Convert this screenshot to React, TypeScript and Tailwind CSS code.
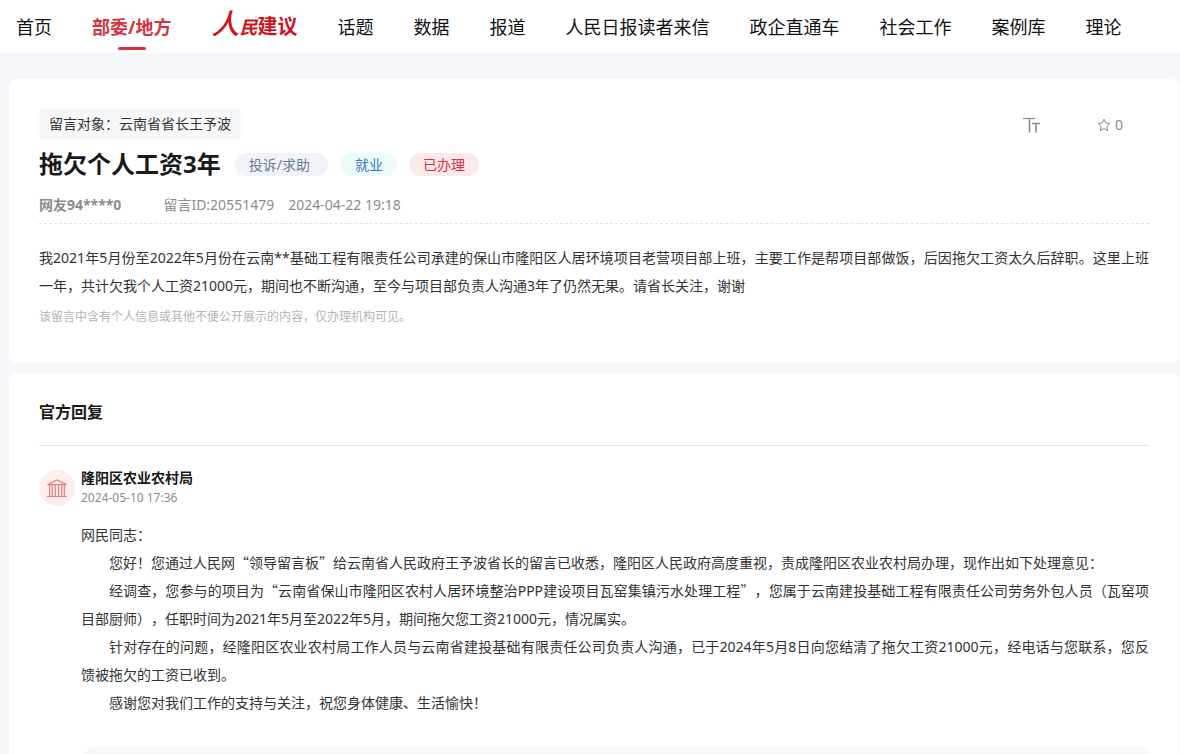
import React from "react";

const navBefore = ["首页"];
const navAfter = ["话题", "数据", "报道", "人民日报读者来信", "政企直通车", "社会工作", "案例库", "理论"];

const linkClass = "whitespace-nowrap text-lg leading-[26px] text-[#111111]";

function Quoted({ children }: { children: React.ReactNode }) {
  return (
    <>
      <span className="font-['Noto_Sans_CJK_SC',sans-serif] leading-none">“</span>
      {children}
      <span className="font-['Noto_Sans_CJK_SC',sans-serif] leading-none">”</span>
    </>
  );
}

function Header() {
  return (
    <header className="bg-white">
      <nav className="flex h-[53px] items-center gap-10 px-4">
        {navBefore.map((label) => (
          <a key={label} href="#" className={linkClass}>{label}</a>
        ))}
        <a href="#" className="relative whitespace-nowrap text-lg font-bold leading-[26px] text-[#d7303f]">
          部委/地方
          <span className="absolute -bottom-[10px] left-1/2 h-[3px] w-7 -translate-x-1/2 rounded-sm bg-[#d7303f]" />
        </a>
        <a href="#" className="flex items-baseline whitespace-nowrap pb-[2px] font-bold leading-[26px] text-[#d01320]">
          <span className="text-[28px] font-medium italic">人</span>
          <span className="text-lg italic">民</span>
          <span className="text-xl">建议</span>
        </a>
        {navAfter.map((label) => (
          <a key={label} href="#" className={linkClass}>{label}</a>
        ))}
      </nav>
    </header>
  );
}

function TextSizeIcon() {
  return (
    <svg viewBox="0 0 18 16" className="h-4 w-[18px]" fill="none" stroke="#8c8c8c" aria-hidden="true">
      <path d="M0 1.5H12" strokeWidth="1.2" />
      <path d="M6.5 1.5V15.5" strokeWidth="1.6" />
      <path d="M9 6.5H17M13 6.5V15.5" strokeWidth="1.6" />
    </svg>
  );
}

function StarIcon() {
  return (
    <svg viewBox="0 0 14 14" className="h-[14px] w-[14px]" fill="none" stroke="#8c8c8c" strokeWidth="1" strokeLinejoin="round" aria-hidden="true">
      <path d="M7 1.2 8.8 4.9 12.9 5.5 9.9 8.4 10.6 12.5 7 10.6 3.4 12.5 4.1 8.4 1.1 5.5 5.2 4.9Z" />
    </svg>
  );
}

function InstitutionIcon() {
  return (
    <svg viewBox="0 0 20 19" className="h-[19px] w-5" fill="none" stroke="#e5807c" strokeWidth="1.2" aria-hidden="true">
      <path d="M0.5 5.6 10 1 19.5 5.6ZM0 17.5H20M2.7 5.6V17.5M5.2 5.6V17.5M8.3 5.6V17.5M11.7 5.6V17.5M14.8 5.6V17.5M17.3 5.6V17.5" />
    </svg>
  );
}

function Message() {
  return (
    <article className="rounded-lg bg-white px-[30px] pb-[35px] pt-[30px]">
      <div className="flex items-center justify-between">
        <p className="rounded-sm bg-[#f6f8fa] px-[10px] text-sm leading-[30px] text-[#333333]">留言对象：云南省省长王予波</p>
        <div className="flex items-center gap-14 pr-[26px] pt-[2px] text-[#8c8c8c]">
          <button type="button" aria-label="字号"><TextSizeIcon /></button>
          <button type="button" className="flex items-center gap-1 text-sm" aria-label="收藏 0"><StarIcon />0</button>
        </div>
      </div>
      <div className="mt-[7px] flex items-center text-sm leading-[23px]">
        <h1 className="mr-[14px] text-2xl font-bold leading-9 text-[#191919]">拖欠个人工资3年</h1>
        <span className="mr-[13px] rounded-full bg-[#f0f4fa] pl-[14px] pr-[18px] text-[#6b7a92]">投诉/求助</span>
        <span className="mr-3 rounded-full bg-[#ebfcfb] px-[14px] text-[#3d73c5]">就业</span>
        <span className="rounded-full bg-[#fbe9eb] px-[14px] text-[#d7303f]">已办理</span>
      </div>
      <div className="flex items-center border-b border-dashed border-[#e3e3e3] pb-[7px] pt-3 text-sm leading-[22px] text-[#8c8c8c]">
        <strong className="mr-[42px]">网友94****0</strong>
        <span className="mr-[14px]">留言ID:20551479</span>
        <time>2024-04-22 19:18</time>
      </div>
      <p className="mt-5 text-justify text-sm leading-7 text-[#333333]">
        我2021年5月份至2022年5月份在云南**基础工程有限责任公司承建的保山市隆阳区人居环境项目老营项目部上班，主要工作是帮项目部做饭，后因拖欠工资太久后辞职。这里上班一年，共计欠我个人工资21000元，期间也不断沟通，至今与项目部负责人沟通3年了仍然无果。请省长关注，谢谢
      </p>
      <p className="mt-[6px] text-xs leading-[22px] text-[#b5b5b5]">该留言中含有个人信息或其他不便公开展示的内容，仅办理机构可见。</p>
    </article>
  );
}

function Reply() {
  return (
    <section className="rounded-t-lg bg-white px-[30px]">
      <h2 className="border-b border-[#e3e3e3] pb-5 pt-[26px] text-base font-bold leading-[26px] text-[#191919]">官方回复</h2>
      <div className="mt-[22px] flex items-center gap-[6px]">
        <span className="flex h-9 w-9 items-center justify-center rounded-full bg-[#feeeee]"><InstitutionIcon /></span>
        <div>
          <h3 className="text-sm font-bold leading-5 text-[#191919]">隆阳区农业农村局</h3>
          <time className="block text-xs leading-5 text-[#8c8c8c]">2024-05-10 17:36</time>
        </div>
      </div>
      <div className="ml-[42px] mt-[13px] text-justify text-sm leading-7 text-[#333333]">
        <p>网民同志：</p>
        <p className="indent-7">您好！您通过人民网<Quoted>领导留言板</Quoted>给云南省人民政府王予波省长的留言已收悉，隆阳区人民政府高度重视，责成隆阳区农业农村局办理，现作出如下处理意见：</p>
        <p className="indent-7">经调查，您参与的项目为<Quoted>云南省保山市隆阳区农村人居环境整治PPP建设项目瓦窑集镇污水处理工程</Quoted>，您属于云南建投基础工程有限责任公司劳务外包人员（瓦窑项目部厨师），任职时间为2021年5月至2022年5月，期间拖欠您工资21000元，情况属实。</p>
        <p className="indent-7">针对存在的问题，经隆阳区农业农村局工作人员与云南省建投基础有限责任公司负责人沟通，已于2024年5月8日向您结清了拖欠工资21000元，经电话与您联系，您反馈被拖欠的工资已收到。</p>
        <p className="indent-7">感谢您对我们工作的支持与关注，祝您身体健康、生活愉快！</p>
      </div>
      <div className="ml-[46px] mt-[30px] h-10 rounded-lg bg-[#f6f8fa]" />
    </section>
  );
}

export default function App() {
  return (
    <div className="h-screen overflow-hidden bg-[#f6f7fa] font-['Noto_Sans','Noto_Sans_CJK_SC',sans-serif] [text-spacing-trim:space-all]">
      <Header />
      <main className="ml-[9px] mr-px mt-[26px] flex flex-col gap-[10px]">
        <Message />
        <Reply />
      </main>
    </div>
  );
}
